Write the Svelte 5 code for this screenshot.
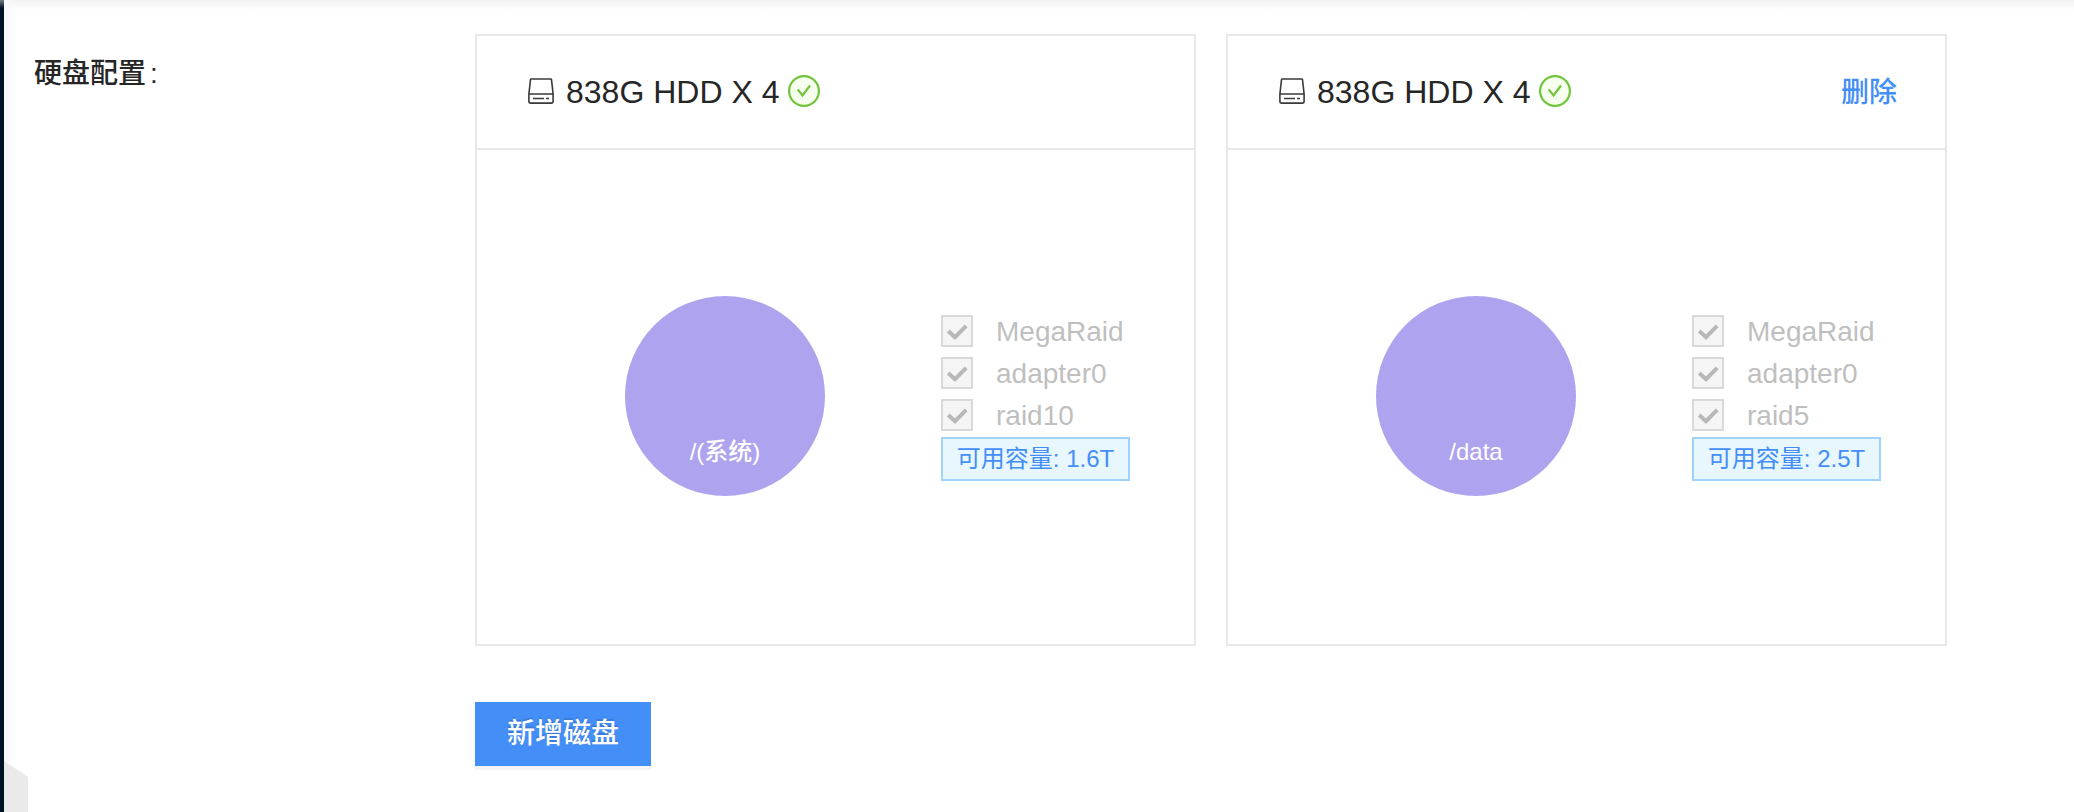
<script>
  const disks = [
    { title: '838G HDD X 4', mount: '/(系统)', options: ['MegaRaid', 'adapter0', 'raid10'], capacity: '1.6T', removable: false },
    { title: '838G HDD X 4', mount: '/data', options: ['MegaRaid', 'adapter0', 'raid5'], capacity: '2.5T', removable: true }
  ];
</script>

<div class="page">
  <div class="label">硬盘配置<span class="colon">:</span></div>
  <main class="content">
    <div class="cards">
      {#each disks as disk}
        <section class="card">
          <header class="head">
            <svg class="hdd" width="26" height="26" viewBox="0 0 26 26" fill="none" stroke="#3a3a3a" stroke-width="1.6">
              <path d="M3.2 1H22.8Q23.4 1 23.5 1.6L25.1 16V23.2Q25.1 25.1 23.2 25.1H2.8Q.9 25.1 .9 23.2V16L2.5 1.6Q2.6 1 3.2 1ZM1 16H25M5 20.5H16M18 20.5H21" />
            </svg>
            <span class="title">{disk.title}</span>
            <svg class="ok" width="32" height="32" viewBox="0 0 32 32" fill="none">
              <circle cx="16" cy="16" r="14.9" fill="#f6ffed" stroke="#70c43b" stroke-width="2.2" />
              <path d="M9.7 14.3L14.5 20.5L22 10.5" stroke="#70c43b" stroke-width="2.1" />
            </svg>
            {#if disk.removable}
              <a class="remove" href="#remove">删除</a>
            {/if}
          </header>
          <div class="body">
            <div class="pie">{disk.mount}</div>
            <div class="info">
              {#each disk.options as option}
                <div class="option">
                  <span class="box">
                    <svg width="28" height="28" viewBox="0 0 28 28" fill="none">
                      <path d="M5.2 14L12 20.2L23.2 8.8" stroke="#b8b8b8" stroke-width="4" />
                    </svg>
                  </span>
                  <span class="name">{option}</span>
                </div>
              {/each}
              <div class="tag">可用容量: {disk.capacity}</div>
            </div>
          </div>
        </section>
      {/each}
    </div>
    <button class="add">新增磁盘</button>
  </main>
  <div class="topshade"></div>
  <div class="rail"></div>
  <div class="handle"></div>
</div>

<style>
  :global(body) {
    margin: 0;
    background: #fff;
  }
  .page {
    position: relative;
    box-sizing: border-box;
    width: 100%;
    height: 812px;
    overflow: hidden;
    display: flex;
    padding: 34px 0 0 34px;
    font-family: "Liberation Sans", Arial, "Noto Sans CJK SC", sans-serif;
    font-size: 28px;
    font-weight: 500;
    color: #262626;
    background: #fff;
  }
  .label {
    width: 441px;
    flex: none;
    line-height: 80px;
  }
  .colon {
    margin-left: 4px;
  }
  .content {
    flex: none;
  }
  .cards {
    display: flex;
    gap: 30px;
  }
  .card {
    box-sizing: border-box;
    width: 721px;
    height: 612px;
    border: 2px solid #e8e8e8;
  }
  .head {
    box-sizing: border-box;
    height: 114px;
    display: flex;
    align-items: center;
    padding: 0 48px 2px 51px;
    border-bottom: 2px solid #e8e8e8;
  }
  .title {
    margin: 0 9px 0 12px;
    padding-top: 2px;
    font-size: 32px;
    line-height: 48px;
    white-space: pre;
  }
  .remove {
    margin-left: auto;
    padding-top: 3px;
    color: #448ef7;
    text-decoration: none;
    line-height: 40px;
  }
  .body {
    display: flex;
    padding: 146px 0 0 148px;
  }
  .pie {
    box-sizing: border-box;
    width: 200px;
    height: 200px;
    border-radius: 50%;
    background: #aea3ee;
    color: #fff;
    font-size: 24px;
    line-height: 36px;
    text-align: center;
    padding-top: 138px;
  }
  .info {
    margin: 14px 0 0 116px;
  }
  .option {
    height: 42px;
    display: flex;
    align-items: center;
    gap: 23px;
    line-height: 40px;
    color: #bfbfbf;
  }
  .name {
    padding-top: 2px;
  }
  .box {
    box-sizing: border-box;
    width: 32px;
    height: 32px;
    border: 2px solid #d9d9d9;
    background: #f5f5f5;
  }
  .box svg {
    display: block;
  }
  .tag {
    box-sizing: border-box;
    width: 189px;
    height: 44px;
    margin-top: 1px;
    border: 2px solid #9fd3fc;
    background: #e8f6fe;
    color: #448ef7;
    font-size: 24px;
    font-weight: 400;
    line-height: 40px;
    text-align: center;
    white-space: nowrap;
  }
  .add {
    display: block;
    width: 176px;
    height: 64px;
    margin-top: 56px;
    padding: 0;
    border: 0;
    background: #448ef7;
    color: #fff;
    font: inherit;
    line-height: 64px;
    text-shadow: 0 -2px 0 rgba(0, 0, 0, 0.12);
    box-shadow: 0 4px 0 rgba(0, 0, 0, 0.043);
  }
  .topshade {
    position: absolute;
    inset: 0 0 auto 0;
    height: 10px;
    background: linear-gradient(#f2f2f2, #fff);
  }
  .rail {
    position: absolute;
    left: 0;
    top: 0;
    width: 18px;
    height: 812px;
    background: linear-gradient(90deg, #001226 4px, #f7f9fa 4px, rgba(255, 255, 255, 0));
  }
  .rail::before {
    content: "";
    position: absolute;
    left: 0;
    top: 0;
    width: 4px;
    height: 8px;
    background: linear-gradient(#777d86, #001226);
  }
  .handle {
    position: absolute;
    left: 4px;
    top: 761px;
    width: 24px;
    height: 51px;
    background: #eaeaea;
    clip-path: polygon(0 0, 100% 16px, 100% 100%, 0 100%);
  }
</style>
